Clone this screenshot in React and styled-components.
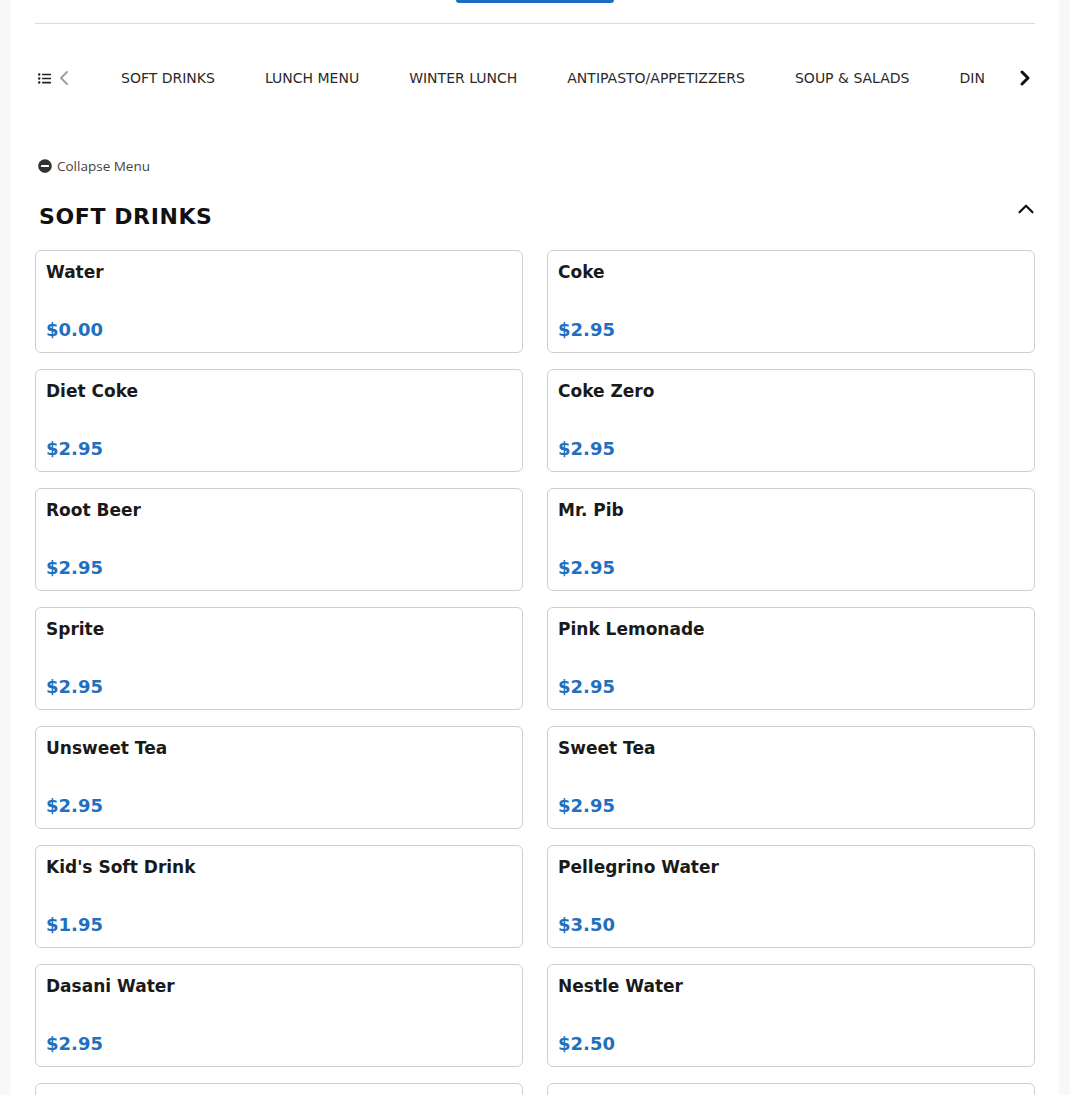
import React from "react";
import styled, { createGlobalStyle } from "styled-components";
import { ChevronLeft, ChevronRight, ChevronUp } from "lucide-react";
import { FaListUl, FaMinusCircle } from "react-icons/fa";

const GlobalStyle = createGlobalStyle`
  html, body { margin: 0; padding: 0; background: #f8f8f8; }
  body { font-family: "DejaVu Sans", "Liberation Sans", sans-serif; color: #1a1a1a; }
  * { box-sizing: border-box; }
`;

const Panel = styled.div`
  margin: 0 11px;
  background: #ffffff;
  padding: 0 24px 40px;
  min-height: 1095px;
`;

const TopBar = styled.div`
  height: 24px;
  border-bottom: 1px solid #dcdcdc;
  display: flex;
  justify-content: center;
`;

const TopButton = styled.div`
  width: 158px;
  height: 3px;
  background: #1b6ec2;
  border-radius: 0 0 5px 5px;
`;

const Nav = styled.nav`
  margin-top: 32px;
  height: 44px;
  display: flex;
  align-items: center;
`;

const NavLeft = styled.div`
  width: 61px;
  display: flex;
  align-items: center;
  padding-left: 3px;
  color: #222;
  svg:first-child { margin-right: 1px; }
`;

const Scroller = styled.div`
  flex: 1;
  overflow: hidden;
  display: flex;
  align-items: center;
  white-space: nowrap;
`;

const NavItem = styled.span`
  flex: none;
  padding: 0 25px;
  font-size: 14px;
  color: #2a2a2a;
`;

const NavRight = styled.div`
  flex: none;
  width: 53px;
  margin-right: -2px;
  display: flex;
  justify-content: flex-end;
  color: #111;
`;

const Collapse = styled.div`
  margin-top: 56px;
  display: flex;
  align-items: center;
  gap: 5px;
  padding-left: 3px;
  height: 20px;
  font-family: "Open Sans", "Noto Sans", sans-serif;
  font-size: 13.5px;
  color: #444;
  svg { color: #333; }
`;

const SectionHead = styled.div`
  margin-top: 25px;
  height: 30px;
  display: flex;
  align-items: center;
  justify-content: space-between;
  padding-left: 4px;
`;

const SectionTitle = styled.h2`
  margin: 0;
  font-size: 22px;
  font-weight: bold;
  letter-spacing: 0.6px;
  color: #111;
`;

const Toggle = styled.span`
  display: flex;
  color: #111;
  margin-top: -14px;
  margin-right: -4px;
`;

const Grid = styled.div`
  margin-top: 19px;
  display: grid;
  grid-template-columns: 1fr 1fr;
  column-gap: 24px;
  row-gap: 16px;
`;

const Card = styled.div`
  height: 103px;
  border: 1px solid #cfcfcf;
  border-radius: 6px;
  padding: 10px;
  display: flex;
  flex-direction: column;
  justify-content: space-between;
`;

const ItemName = styled.div`
  font-size: 17px;
  font-weight: bold;
  line-height: 22px;
  color: #1a1a1a;
`;

const Price = styled.div`
  font-size: 18px;
  font-weight: bold;
  line-height: 24px;
  color: #1f70bd;
`;

const categories = [
  "SOFT DRINKS",
  "LUNCH MENU",
  "WINTER LUNCH",
  "ANTIPASTO/APPETIZZERS",
  "SOUP & SALADS",
  "DINNER ENTREES",
  "DESSERTS",
];

const items = [
  ["Water", "$0.00"],
  ["Coke", "$2.95"],
  ["Diet Coke", "$2.95"],
  ["Coke Zero", "$2.95"],
  ["Root Beer", "$2.95"],
  ["Mr. Pib", "$2.95"],
  ["Sprite", "$2.95"],
  ["Pink Lemonade", "$2.95"],
  ["Unsweet Tea", "$2.95"],
  ["Sweet Tea", "$2.95"],
  ["Kid's Soft Drink", "$1.95"],
  ["Pellegrino Water", "$3.50"],
  ["Dasani Water", "$2.95"],
  ["Nestle Water", "$2.50"],
  ["Coffee", "$2.95"],
  ["Hot Tea", "$2.95"],
];

export default function App() {
  return (
    <>
      <GlobalStyle />
      <Panel>
        <TopBar>
          <TopButton />
        </TopBar>
        <Nav>
          <NavLeft>
            <FaListUl size={13} />
            <ChevronLeft size={24} color="#a0a0a0" strokeWidth={2} />
          </NavLeft>
          <Scroller>
            {categories.map((c) => (
              <NavItem key={c}>{c}</NavItem>
            ))}
          </Scroller>
          <NavRight>
            <ChevronRight size={24} strokeWidth={3} />
          </NavRight>
        </Nav>
        <Collapse>
          <FaMinusCircle size={14} />
          Collapse Menu
        </Collapse>
        <SectionHead>
          <SectionTitle>SOFT DRINKS</SectionTitle>
          <Toggle>
            <ChevronUp size={26} strokeWidth={2} />
          </Toggle>
        </SectionHead>
        <Grid>
          {items.map(([name, price]) => (
            <Card key={name}>
              <ItemName>{name}</ItemName>
              <Price>{price}</Price>
            </Card>
          ))}
        </Grid>
      </Panel>
    </>
  );
}
